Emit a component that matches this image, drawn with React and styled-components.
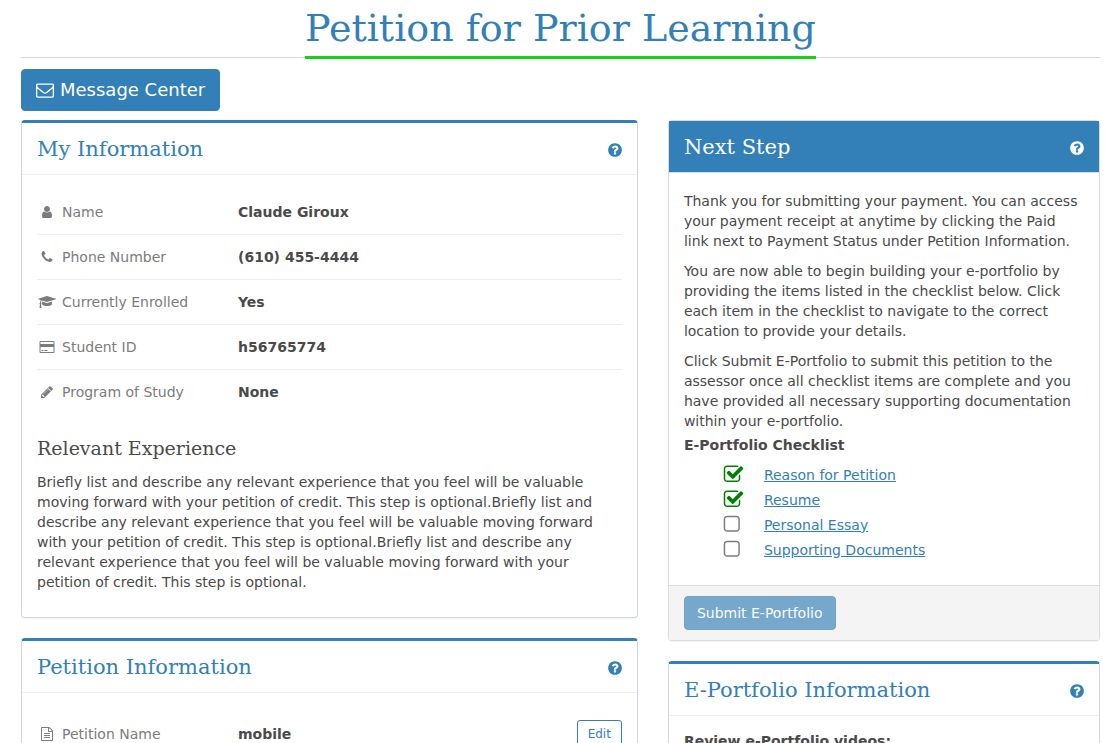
import styled, {createGlobalStyle} from 'styled-components';

const GlobalStyle = createGlobalStyle`
    *, *::before, *::after {
        box-sizing: border-box;
    }

    body {
        margin: 0;
        background-color: white;
        color: #4a4a4a;
        font-family: "DejaVu Sans", Verdana, sans-serif;
        font-size: 14px;
        line-height: 20px;
    }

    button, input {
        font-family: inherit;
    }

    h1, h2, h3, h4, p, dl, dd, ul {
        margin: 0;
        padding: 0;
    }
`;

const ICONS = {
    envelope: {
        width: 1792,
        path: 'M1664 1504v-768q-32 36-69 66-268 206-426 338-51 43-83 67t-86.5 48.5-102.5 24.5h-2q-48 0-102.5-24.5t-86.5-48.5-83-67q-158-132-426-338-37-30-69-66v768q0 13 9.5 22.5t22.5 9.5h1472q13 0 22.5-9.5t9.5-22.5zm0-1051v-24.5l-.5-13-3-12.5-5.5-9-9-7.5-14-2.5h-1472q-13 0-22.5 9.5t-9.5 22.5q0 168 147 284 193 152 401 317 6 5 35 29.5t46 37.5 44.5 31.5 50.5 27.5 43 9h2q20 0 43-9t50.5-27.5 44.5-31.5 46-37.5 35-29.5q208-165 401-317 54-43 100.5-115.5t46.5-131.5zm128-37v1088q0 66-47 113t-113 47h-1472q-66 0-113-47t-47-113v-1088q0-66 47-113t113-47h1472q66 0 113 47t47 113z',
    },
    user: {
        width: 1792,
        path: 'M1536 1399q0 109-62.5 187t-150.5 78h-854q-88 0-150.5-78t-62.5-187q0-85 8.5-160.5t31.5-152 58.5-131 94-89 134.5-34.5q131 128 313 128t313-128q76 0 134.5 34.5t94 89 58.5 131 31.5 152 8.5 160.5zm-256-887q0 159-112.5 271.5t-271.5 112.5-271.5-112.5-112.5-271.5 112.5-271.5 271.5-112.5 271.5 112.5 112.5 271.5z',
    },
    phone: {
        width: 1792,
        path: 'M1600 1240q0 27-10 70.5t-21 68.5q-21 50-122 106-94 51-186 51-27 0-53-3.5t-57.5-12.5-47-14.5-55.5-20.5-49-18q-98-35-175-83-127-79-264-216t-216-264q-48-77-83-175-3-9-18-49t-20.5-55.5-14.5-47-12.5-57.5-3.5-53q0-92 51-186 56-101 106-122 25-11 68.5-21t70.5-10q14 0 21 3 18 6 53 76 11 19 30 54t35 63.5 31 53.5q3 4 17.5 25t21.5 35.5 7 28.5q0 20-28.5 50t-62 55-62 53-28.5 46q0 9 5 22.5t8.5 20.5 14 24 11.5 19q76 137 174 235t235 174q2 1 19 11.5t24 14 20.5 8.5 22.5 5q18 0 46-28.5t53-62 55-62 50-28.5q14 0 28.5 7t35.5 21.5 25 17.5q25 15 53.5 31t63.5 35 54 30q70 35 76 53 3 7 3 21z',
    },
    graduation: {
        width: 2304,
        path: 'M1774 836l18 316q4 69-82 128t-235 93.5-323 34.5-323-34.5-235-93.5-82-128l18-316 574 181q22 7 48 7t48-7zm530-324q0 23-22 31l-1120 352q-4 1-10 1t-10-1l-652-206q-43 34-71 111.5t-34 178.5q63 36 63 109 0 69-58 107l58 433q2 14-8 25-9 11-24 11h-192q-15 0-24-11-10-11-8-25l58-433q-58-38-58-107 0-73 65-111 11-207 98-330l-333-104q-22-8-22-31t22-31l1120-352q4-1 10-1t10 1l1120 352q22 8 22 31z',
    },
    card: {
        width: 1920,
        path: 'M1760 128q66 0 113 47t47 113v1216q0 66-47 113t-113 47h-1600q-66 0-113-47t-47-113v-1216q0-66 47-113t113-47h1600zm-1600 128q-13 0-22.5 9.5t-9.5 22.5v224h1664v-224q0-13-9.5-22.5t-22.5-9.5h-1600zm1600 1280q13 0 22.5-9.5t9.5-22.5v-608h-1664v608q0 13 9.5 22.5t22.5 9.5h1600zm-1504-128v-128h256v128h-256zm384 0v-128h384v128h-384z',
    },
    pencil: {
        width: 1792,
        path: 'M491 1536l91-91-235-235-91 91v107h128v128h107zm523-928q0-22-22-22-10 0-17 7l-542 542q-7 7-7 17 0 22 22 22 10 0 17-7l542-542q7-7 7-17zm-54-192l416 416-832 832h-416v-416zm683 96q0 53-37 90l-166 166-416-416 166-165q36-38 90-38 53 0 91 38l235 234q37 39 37 91z',
    },
    file: {
        width: 1792,
        path: 'M1596 380q28 28 48 76t20 88v1152q0 40-28 68t-68 28h-1344q-40 0-68-28t-28-68v-1600q0-40 28-68t68-28h896q40 0 88 20t76 48zm-444-244v376h376q-10-29-22-41l-313-313q-12-12-41-22zm384 1528v-1024h-416q-40 0-68-28t-28-68v-416h-768v1536h1280zm-1024-864q0-14 9-23t23-9h704q14 0 23 9t9 23v64q0 14-9 23t-23 9h-704q-14 0-23-9t-9-23v-64zm736 224q14 0 23 9t9 23v64q0 14-9 23t-23 9h-704q-14 0-23-9t-9-23v-64q0-14 9-23t23-9h704zm0 256q14 0 23 9t9 23v64q0 14-9 23t-23 9h-704q-14 0-23-9t-9-23v-64q0-14 9-23t23-9h704z',
    },
    question: {
        width: 1792,
        path: 'M1024 1376v-192q0-14-9-23t-23-9h-192q-14 0-23 9t-9 23v192q0 14 9 23t23 9h192q14 0 23-9t9-23zm256-672q0-88-55.5-163t-138.5-116-170-41q-243 0-371 213-15 24 8 42l132 100q7 6 19 6 16 0 25-12 53-68 86-92 34-24 86-24 48 0 85.5 26t37.5 59q0 38-20 61t-68 45q-63 28-115.5 86.5t-52.5 125.5v36q0 14 9 23t23 9h192q14 0 23-9t9-23q0-19 21.5-49.5t54.5-49.5q32-18 49-28.5t46-35 44.5-48 28-60.5 12.5-81zm384 192q0 209-103 385.5t-279.5 279.5-385.5 103-385.5-103-279.5-279.5-103-385.5 103-385.5 279.5-279.5 385.5-103 385.5 103 279.5 279.5 103 385.5z',
    },
    checked: {
        width: 1792,
        path: 'M1472 930v318q0 119-84.5 203.5t-203.5 84.5h-832q-119 0-203.5-84.5t-84.5-203.5v-832q0-119 84.5-203.5t203.5-84.5h832q63 0 117 25 15 7 18 23 3 17-9 29l-49 49q-10 10-23 10-3 0-9-2-23-6-45-6h-832q-66 0-113 47t-47 113v832q0 66 47 113t113 47h832q66 0 113-47t47-113v-254q0-13 9-22l64-64q10-10 23-10 6 0 12 3 20 8 20 29zm231-489l-814 814q-24 24-57 24t-57-24l-430-430q-24-24-24-57t24-57l110-110q24-24 57-24t57 24l263 263 647-647q24-24 57-24t57 24l110 110q24 24 24 57t-24 57z',
    },
    unchecked: {
        width: 1664,
        path: 'M1184 256h-832q-66 0-113 47t-47 113v832q0 66 47 113t113 47h832q66 0 113-47t47-113v-832q0-66-47-113t-113-47zm288 160v832q0 119-84.5 203.5t-203.5 84.5h-832q-119 0-203.5-84.5t-84.5-203.5v-832q0-119 84.5-203.5t203.5-84.5h832q119 0 203.5 84.5t84.5 203.5z',
    },
};

const Page = styled.main`
    padding: 0 16px 0 21px;
`;

const TitleBar = styled.header`
    display: flex;
    justify-content: center;
    height: 58px;
    margin-bottom: 11px;
    border-bottom: 1px solid #cfd8e0;
`;

const Title = styled.h1`
    height: 59px;
    border-bottom: 3px solid #14d214;
    color: #3280b7;
    font-family: "DejaVu Serif", serif;
    font-size: 38px;
    font-weight: 400;
    line-height: 56px;
    white-space: nowrap;
`;

const Button = styled.button`
    display: inline-flex;
    align-items: center;
    gap: 6px;
    padding: 6px 12px;
    border: 1px solid #2d76a9;
    border-radius: 4px;
    background-color: #3280b7;
    color: white;
    font-size: 14px;
    font-weight: 400;
    line-height: 20px;
    cursor: pointer;

    &:disabled {
        opacity: 0.65;
        cursor: not-allowed;
    }
`;

const MessageButton = styled(Button)`
    height: 42px;
    padding: 0 14px;
    border-color: #3280b7;
    font-size: 18px;
`;

const EditButton = styled(Button)`
    padding: 3px 10px;
    border-color: #3280b7;
    border-radius: 3px;
    background-color: white;
    color: #3280b7;
    font-size: 12px;
`;

const Columns = styled.div`
    display: flex;
    margin: 9px -15px 0;
`;

const Column = styled.div`
    width: calc(100% * ${({$span}) => $span} / 12);
    padding: 0 15px;
`;

const Card = styled.section`
    margin-bottom: 20px;
    border: 1px solid ${({$filled}) => ($filled ? '#dcdcdc' : '#cfd8e0')};
    border-top: ${({$filled}) => ($filled ? '1px solid #dcdcdc' : '3px solid #3280b7')};
    border-radius: 4px;
    background-color: white;
    box-shadow: 0 1px 1px rgba(0, 0, 0, 0.05);
`;

const CardHeader = styled.div`
    display: flex;
    align-items: center;
    justify-content: space-between;
    height: 52px;
    padding: 0 14px 0 15px;
    border-bottom: 1px solid ${({$filled}) => ($filled ? '#dcdcdc' : '#eeeeee')};
    background-color: ${({$filled}) => ($filled ? '#3280b7' : 'white')};
    color: ${({$filled}) => ($filled ? 'white' : '#3280b7')};
`;

const CardTitle = styled.h2`
    font-family: "DejaVu Serif", serif;
    font-size: 21px;
    font-weight: 400;
    line-height: 28px;
`;

const HelpButton = styled.button`
    display: flex;
    padding: 2px 0 0;
    border: 0;
    background: none;
    color: inherit;
    cursor: pointer;
`;

const CardBody = styled.div`
    padding: 15px;
`;

const CardFooter = styled.div`
    padding: 10px 15px;
    border-top: 1px solid #dcdcdc;
    background-color: #f4f4f4;
`;

const InfoRow = styled.div`
    display: flex;
    align-items: center;
    padding: 12px 0;
    border-bottom: 1px solid #eeeeee;

    &:last-child {
        border-bottom-color: transparent;
    }
`;

const InfoLabel = styled.dt`
    display: flex;
    align-items: center;
    gap: 6px;
    width: 201px;
    padding-left: 1px;
    color: #7c7c7c;
`;

const InfoValue = styled.dd`
    flex: 1;
    font-weight: 700;
`;

const SectionTitle = styled.h3`
    margin: 20px 0 10px;
    font-family: "DejaVu Serif", serif;
    font-size: 19px;
    font-weight: 400;
    line-height: 27px;
`;

const Paragraph = styled.p`
    margin-bottom: 10px;
`;

const StepBody = styled(CardBody)`
    padding-top: 18px;
    padding-bottom: 23px;
`;

const BodyTitle = styled.h4`
    font-size: 14px;
    font-weight: 700;
`;

const ChecklistTitle = styled(BodyTitle)`
    margin-top: -6px;
`;

const Checklist = styled.ul`
    margin-top: 7px;
    padding-left: 39px;
    list-style: none;
`;

const ChecklistItem = styled.li`
    display: flex;
    align-items: center;
    gap: 20px;
    height: 25px;
`;

const Tick = styled.span`
    position: relative;
    display: flex;
    width: 21px;
    color: ${({$done}) => ($done ? '#008000' : '#7c7c7c')};
`;

const TickInput = styled.input`
    position: absolute;
    inset: 0;
    margin: 0;
    opacity: 0;
`;

const Link = styled.a`
    color: #3280b7;
    text-decoration: underline;
`;

function Icon({name, width, height}) {
    const {width: boxWidth, path} = ICONS[name];
    return (
        <svg width={width} height={height} viewBox={`0 0 ${boxWidth} 1792`} fill="currentColor" aria-hidden="true">
            <path d={path}/>
        </svg>
    );
}

function Header({title, filled}) {
    return (
        <CardHeader $filled={filled}>
            <CardTitle>{title}</CardTitle>
            <HelpButton type="button" aria-label={`Help: ${title}`}>
                <Icon name="question" width={16} height={16}/>
            </HelpButton>
        </CardHeader>
    );
}

function Info({icon, label, value, children}) {
    return (
        <InfoRow>
            <InfoLabel>
                <Icon name={icon} width={18} height={14}/>
                {label}
            </InfoLabel>
            <InfoValue>{value}</InfoValue>
            {children}
        </InfoRow>
    );
}

const student = [
    {icon: 'user', label: 'Name', value: 'Claude Giroux'},
    {icon: 'phone', label: 'Phone Number', value: '(610) 455-4444'},
    {icon: 'graduation', label: 'Currently Enrolled', value: 'Yes'},
    {icon: 'card', label: 'Student ID', value: 'h56765774'},
    {icon: 'pencil', label: 'Program of Study', value: 'None'},
];

const checklist = [
    {id: 'reason', label: 'Reason for Petition', done: true},
    {id: 'resume', label: 'Resume', done: true},
    {id: 'essay', label: 'Personal Essay', done: false},
    {id: 'documents', label: 'Supporting Documents', done: false},
];

export default function App() {
    return (
        <Page>
            <GlobalStyle/>
            <TitleBar>
                <Title>Petition for Prior Learning</Title>
            </TitleBar>
            <MessageButton type="button">
                <Icon name="envelope" width={18} height={18}/>
                Message Center
            </MessageButton>
            <Columns>
                <Column $span={7}>
                    <Card>
                        <Header title="My Information"/>
                        <CardBody>
                            <dl>
                                {student.map((row) => <Info key={row.label} {...row}/>)}
                            </dl>
                            <SectionTitle>Relevant Experience</SectionTitle>
                            <Paragraph>
                                Briefly list and describe any relevant experience that you feel will be valuable
                                moving forward with your petition of credit. This step is optional.Briefly list and
                                describe any relevant experience that you feel will be valuable moving forward
                                with your petition of credit. This step is optional.Briefly list and describe any
                                relevant experience that you feel will be valuable moving forward with your
                                petition of credit. This step is optional.
                            </Paragraph>
                        </CardBody>
                    </Card>
                    <Card>
                        <Header title="Petition Information"/>
                        <CardBody>
                            <dl>
                                <Info icon="file" label="Petition Name" value="mobile">
                                    <EditButton type="button">Edit</EditButton>
                                </Info>
                            </dl>
                        </CardBody>
                    </Card>
                </Column>
                <Column $span={5}>
                    <Card $filled>
                        <Header title="Next Step" filled/>
                        <StepBody>
                            <Paragraph>
                                Thank you for submitting your payment. You can access your payment receipt at
                                anytime by clicking the Paid link next to Payment Status under Petition
                                Information.
                            </Paragraph>
                            <Paragraph>
                                You are now able to begin building your e-portfolio by providing the items listed
                                in the checklist below. Click each item in the checklist to navigate to the
                                correct location to provide your details.
                            </Paragraph>
                            <Paragraph>
                                Click Submit E-Portfolio to submit this petition to the assessor once all
                                checklist items are complete and you have provided all necessary supporting
                                documentation within your e-portfolio.
                            </Paragraph>
                            <ChecklistTitle>E-Portfolio Checklist</ChecklistTitle>
                            <Checklist>
                                {checklist.map(({id, label, done}) => (
                                    <ChecklistItem key={id}>
                                        <Tick $done={done}>
                                            <Icon name={done ? 'checked' : 'unchecked'} width={done ? 21 : 19} height={21}/>
                                            <TickInput type="checkbox" checked={done} readOnly aria-labelledby={id}/>
                                        </Tick>
                                        <Link id={id} href={`#${id}`}>{label}</Link>
                                    </ChecklistItem>
                                ))}
                            </Checklist>
                        </StepBody>
                        <CardFooter>
                            <Button type="button" disabled>Submit E-Portfolio</Button>
                        </CardFooter>
                    </Card>
                    <Card>
                        <Header title="E-Portfolio Information"/>
                        <CardBody>
                            <BodyTitle>Review e-Portfolio videos:</BodyTitle>
                        </CardBody>
                    </Card>
                </Column>
            </Columns>
        </Page>
    );
}
